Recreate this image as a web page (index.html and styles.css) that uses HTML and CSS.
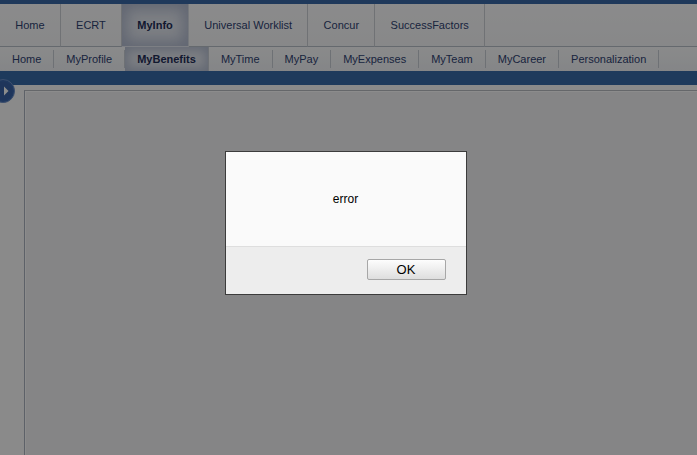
FILE: index.html
```html
<!DOCTYPE html>
<html>
<head>
<meta charset="utf-8">
<link rel="stylesheet" href="styles.css">
</head>
<body>
<div class="page">
  <div class="topstrip"></div>
  <div class="tabs">
    <div class="tab">Home</div>
    <div class="tab">ECRT</div>
    <div class="tab active">MyInfo</div>
    <div class="tab">Universal Worklist</div>
    <div class="tab">Concur</div>
    <div class="tab">SuccessFactors</div>
    <div class="tab-fill"></div>
  </div>
  <div class="subtabs">
    <div class="subtab">Home</div>
    <div class="subtab">MyProfile</div>
    <div class="subtab active">MyBenefits</div>
    <div class="subtab">MyTime</div>
    <div class="subtab">MyPay</div>
    <div class="subtab">MyExpenses</div>
    <div class="subtab">MyTeam</div>
    <div class="subtab">MyCareer</div>
    <div class="subtab">Personalization</div>
  </div>
  <div class="bluebar"></div>
  <div class="content">
    <div class="toggle">
      <svg width="24" height="24" viewBox="0 0 24 24"><circle cx="12" cy="12" r="11.5" fill="#3a66ad" stroke="#6d8fc6" stroke-width="1"/><circle cx="12" cy="12" r="9.5" fill="#3a62a6"/><path d="M13 7.5 L17.5 12 L13 16.5 Z" fill="#ffffff"/></svg>
    </div>
    <div class="sidebar"></div>
    <div class="main">
      <div class="frame"></div>
    </div>
  </div>
</div>
<div class="overlay">
  <div class="dialog">
    <div class="dialog-body">error</div>
    <div class="dialog-foot">
      <button class="ok">OK</button>
    </div>
  </div>
</div>
</body>
</html>
```
FILE: styles.css
```css
html, body {
  margin: 0;
  padding: 0;
  height: 100%;
  overflow: hidden;
}
body {
  font-family: "Liberation Sans", Arial, sans-serif;
  background: #f3f4f6;
}
.page {
  height: 455px;
  display: flex;
  flex-direction: column;
}
.topstrip {
  height: 4px;
  background: #3a68a6;
}
.tabs {
  display: flex;
  height: 43px;
  background: linear-gradient(#fdfdfe, #f6f7f9);
}
.tab {
  display: flex;
  align-items: center;
  padding: 0 15.25px 1px;
  font-size: 11px;
  color: #2f4272;
  border-right: 1px solid #ccd0d6;
  border-bottom: 1px solid #b9c0c8;
  box-sizing: border-box;
  white-space: nowrap;
}
.tab.active {
  font-weight: bold;
  color: #1f2e58;
  border-bottom-color: transparent;
  border-right-color: #d8dce4;
  background: #e4e8f0;
  box-shadow: inset 0 0 14px 5px rgba(70, 90, 140, 0.32);
}
.tab-fill {
  flex: 1;
  border-bottom: 1px solid #b9c0c8;
}
.subtabs {
  display: flex;
  height: 24px;
  background: linear-gradient(#fbfcfd, #f1f3f6);
  align-items: center;
}
.subtab {
  padding: 0 12px;
  font-size: 11px;
  color: #2f4272;
  line-height: 18px;
  border-right: 1px solid #c9ced5;
  white-space: nowrap;
}
.subtab.active {
  font-weight: bold;
  color: #1f2e58;
  line-height: 24px;
  background: #e2e6ee;
  box-shadow: inset 0 0 10px 3px rgba(70, 90, 140, 0.28);
}
.bluebar {
  height: 14px;
  background: #376aa8;
}
.content {
  flex: 1;
  display: flex;
  position: relative;
  background: #fbfbfb;
}
.toggle {
  position: absolute;
  left: -9px;
  top: -6px;
  width: 24px;
  height: 24px;
}
.toggle svg {
  display: block;
}
.sidebar {
  width: 24px;
  flex: none;
}
.main {
  flex: 1;
  padding-top: 5px;
  display: flex;
}
.frame {
  flex: 1;
  border-top: 1px solid #b8bcc2;
  border-left: 1px solid #a9b1bd;
  background: #f2f3f5;
  box-shadow: inset 1px 1px 0 #ffffff;
}
.overlay {
  position: fixed;
  inset: 0;
  background: rgba(0, 0, 0, 0.45);
  display: flex;
  justify-content: center;
  align-items: flex-start;
  padding: 151px 6px 0 0;
}
.dialog {
  width: 240px;
  border: 1px solid #3c3c3c;
  background: #fafafa;
  display: flex;
  flex-direction: column;
}
.dialog-body {
  height: 94px;
  display: flex;
  align-items: center;
  justify-content: center;
  font-size: 12px;
  color: #000;
  background: #fafafa;
  padding-bottom: 1px;
  box-sizing: border-box;
}
.dialog-foot {
  height: 48px;
  background: #ededed;
  border-top: 1px solid #dedede;
  display: flex;
  justify-content: flex-end;
  align-items: flex-start;
  padding: 12px 20px 0 0;
  box-sizing: border-box;
}
.ok {
  width: 79px;
  height: 21px;
  font-family: "Liberation Sans", Arial, sans-serif;
  font-size: 13px;
  color: #000;
  border: 1px solid #a7a7a7;
  border-radius: 2px;
  background: linear-gradient(#fdfdfd, #dedede);
  padding: 0;
}
```
